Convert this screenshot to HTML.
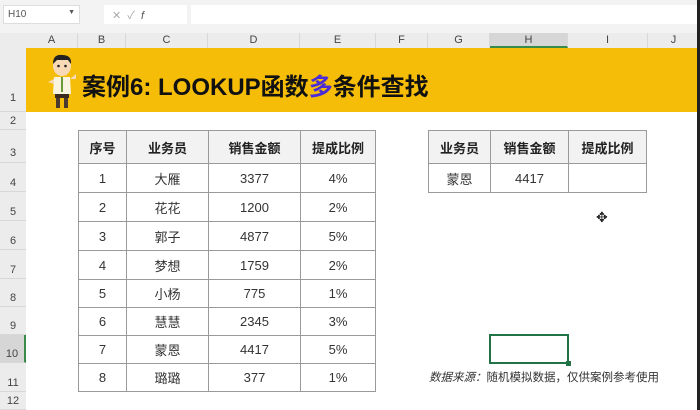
<!DOCTYPE html>
<html><head><meta charset="utf-8"><style>
*{margin:0;padding:0;box-sizing:border-box}
body{width:700px;height:410px;overflow:hidden;background:#fff;position:relative;font-family:"Liberation Sans","Noto Sans CJK SC",sans-serif;color:#222}
.a{position:absolute}
.ch{position:absolute;top:33px;height:15px;font-size:11px;color:#444;text-align:center;line-height:15px;border-right:1px solid #d8d8d8}
.rh{position:absolute;left:0;width:26px;font-size:11px;color:#444;text-align:center;border-bottom:1px solid #d8d8d8;background:#ececec}
.c{position:absolute;border:1px solid #9a9a9a;font-size:13px;text-align:center;display:flex;align-items:center;justify-content:center;color:#333}
.h{background:#f2f2f2;font-weight:bold;color:#222}
</style></head><body>
<div class="a" style="left:0;top:0;width:700px;height:33px;background:#f3f3f3"></div>
<div class="a" style="left:3px;top:5px;width:77px;height:19px;background:#fff;border:1px solid #ddd;font-size:10px;color:#555;padding:3px 4px">H10<span style="float:right;font-size:7px">▼</span></div>
<div class="a" style="left:104px;top:5px;width:83px;height:19px;background:#fff;font-size:11px;color:#aaa;padding:2px 8px">✕ &nbsp;✓ &nbsp;<i style="color:#555">f</i></div>
<div class="a" style="left:191px;top:5px;width:509px;height:19px;background:#fff"></div>
<div class="a" style="left:0;top:33px;width:700px;height:15px;background:#ececec"></div>
<div class="ch" style="left:26px;width:52px">A</div>
<div class="ch" style="left:78px;width:48px">B</div>
<div class="ch" style="left:126px;width:82px">C</div>
<div class="ch" style="left:208px;width:92px">D</div>
<div class="ch" style="left:300px;width:76px">E</div>
<div class="ch" style="left:376px;width:52px">F</div>
<div class="ch" style="left:428px;width:62px">G</div>
<div class="ch" style="left:490px;width:78px;background:#d6d6d6;border-bottom:2px solid #3a8a4a">H</div>
<div class="ch" style="left:568px;width:80px">I</div>
<div class="ch" style="left:648px;width:52px">J</div>
<div class="rh" style="top:48px;height:64px;line-height:100px">1</div>
<div class="rh" style="top:112px;height:18px;line-height:18px">2</div>
<div class="rh" style="top:130px;height:33px;line-height:46px">3</div>
<div class="rh" style="top:163px;height:29px;line-height:40px">4</div>
<div class="rh" style="top:192px;height:29px;line-height:40px">5</div>
<div class="rh" style="top:221px;height:29px;line-height:40px">6</div>
<div class="rh" style="top:250px;height:29px;line-height:40px">7</div>
<div class="rh" style="top:279px;height:28px;line-height:38px">8</div>
<div class="rh" style="top:307px;height:28px;line-height:38px">9</div>
<div class="rh" style="top:335px;height:28px;line-height:38px;background:#d6d6d6;border-right:2px solid #3a8a4a">10</div>
<div class="rh" style="top:363px;height:29px;line-height:40px">11</div>
<div class="rh" style="top:392px;height:18px;line-height:18px">12</div>
<div class="a" style="left:26px;top:48px;width:674px;height:64px;background:#f5bd07"></div>
<svg class="a" style="left:44px;top:52px" width="36" height="58" viewBox="0 0 36 58">
<ellipse cx="18" cy="14" rx="9" ry="10" fill="#f7d9b6"/>
<path d="M9 12 Q9 2 18 3 Q28 3 27 12 L24 8 L13 8 Z" fill="#222"/>
<circle cx="14.5" cy="14" r="1.3" fill="#222"/><circle cx="21.5" cy="14" r="1.3" fill="#222"/>
<path d="M10 25 L26 25 L27 42 L9 42 Z" fill="#f8f4e0"/>
<path d="M17 25 L19 25 L19 40 L17 40Z" fill="#6a9a3a"/>
<path d="M4 30 L10 27 L10 32 Z" fill="#f7d9b6"/><path d="M26 27 L32 22 L32 27 Z" fill="#f7d9b6"/>
<rect x="11" y="42" width="14" height="4" fill="#3a2a20"/>
<rect x="12" y="46" width="4" height="10" fill="#4a3a30"/><rect x="20" y="46" width="4" height="10" fill="#4a3a30"/>
</svg>
<div class="a" style="left:82px;top:67px;font-size:24px;font-weight:bold;color:#111;white-space:nowrap">案例6: LOOKUP函数<span style="color:#4a2bd6">多</span>条件查找</div>
<div class="c h" style="left:78px;top:130px;width:49px;height:34px">序号</div>
<div class="c h" style="left:126px;top:130px;width:83px;height:34px">业务员</div>
<div class="c h" style="left:208px;top:130px;width:93px;height:34px">销售金额</div>
<div class="c h" style="left:300px;top:130px;width:76px;height:34px">提成比例</div>
<div class="c" style="left:78px;top:163px;width:49px;height:30px">1</div><div class="c" style="left:126px;top:163px;width:83px;height:30px">大雁</div><div class="c" style="left:208px;top:163px;width:93px;height:30px">3377</div><div class="c" style="left:300px;top:163px;width:76px;height:30px">4%</div>
<div class="c" style="left:78px;top:192px;width:49px;height:30px">2</div><div class="c" style="left:126px;top:192px;width:83px;height:30px">花花</div><div class="c" style="left:208px;top:192px;width:93px;height:30px">1200</div><div class="c" style="left:300px;top:192px;width:76px;height:30px">2%</div>
<div class="c" style="left:78px;top:221px;width:49px;height:30px">3</div><div class="c" style="left:126px;top:221px;width:83px;height:30px">郭子</div><div class="c" style="left:208px;top:221px;width:93px;height:30px">4877</div><div class="c" style="left:300px;top:221px;width:76px;height:30px">5%</div>
<div class="c" style="left:78px;top:250px;width:49px;height:30px">4</div><div class="c" style="left:126px;top:250px;width:83px;height:30px">梦想</div><div class="c" style="left:208px;top:250px;width:93px;height:30px">1759</div><div class="c" style="left:300px;top:250px;width:76px;height:30px">2%</div>
<div class="c" style="left:78px;top:279px;width:49px;height:29px">5</div><div class="c" style="left:126px;top:279px;width:83px;height:29px">小杨</div><div class="c" style="left:208px;top:279px;width:93px;height:29px">775</div><div class="c" style="left:300px;top:279px;width:76px;height:29px">1%</div>
<div class="c" style="left:78px;top:307px;width:49px;height:29px">6</div><div class="c" style="left:126px;top:307px;width:83px;height:29px">慧慧</div><div class="c" style="left:208px;top:307px;width:93px;height:29px">2345</div><div class="c" style="left:300px;top:307px;width:76px;height:29px">3%</div>
<div class="c" style="left:78px;top:335px;width:49px;height:29px">7</div><div class="c" style="left:126px;top:335px;width:83px;height:29px">蒙恩</div><div class="c" style="left:208px;top:335px;width:93px;height:29px">4417</div><div class="c" style="left:300px;top:335px;width:76px;height:29px">5%</div>
<div class="c" style="left:78px;top:363px;width:49px;height:29px">8</div><div class="c" style="left:126px;top:363px;width:83px;height:29px">璐璐</div><div class="c" style="left:208px;top:363px;width:93px;height:29px">377</div><div class="c" style="left:300px;top:363px;width:76px;height:29px">1%</div>
<div class="c h" style="left:428px;top:130px;width:63px;height:34px">业务员</div>
<div class="c h" style="left:490px;top:130px;width:79px;height:34px">销售金额</div>
<div class="c h" style="left:568px;top:130px;width:79px;height:34px">提成比例</div>
<div class="c" style="left:428px;top:163px;width:63px;height:30px">蒙恩</div>
<div class="c" style="left:490px;top:163px;width:79px;height:30px">4417</div>
<div class="c" style="left:568px;top:163px;width:79px;height:30px"></div>
<div class="a" style="left:596px;top:209px;font-size:14px;color:#222">✥</div>
<div class="a" style="left:489px;top:334px;width:80px;height:30px;border:2px solid #217346"></div>
<div class="a" style="left:566px;top:361px;width:5px;height:5px;background:#217346"></div>
<div class="a" style="left:429px;top:369px;font-size:11.5px;color:#333;white-space:nowrap"><i>数据来源：</i>随机模拟数据，仅供案例参考使用</div>
<div class="a" style="left:697px;top:0;width:3px;height:410px;background:#222"></div>
</body></html>
